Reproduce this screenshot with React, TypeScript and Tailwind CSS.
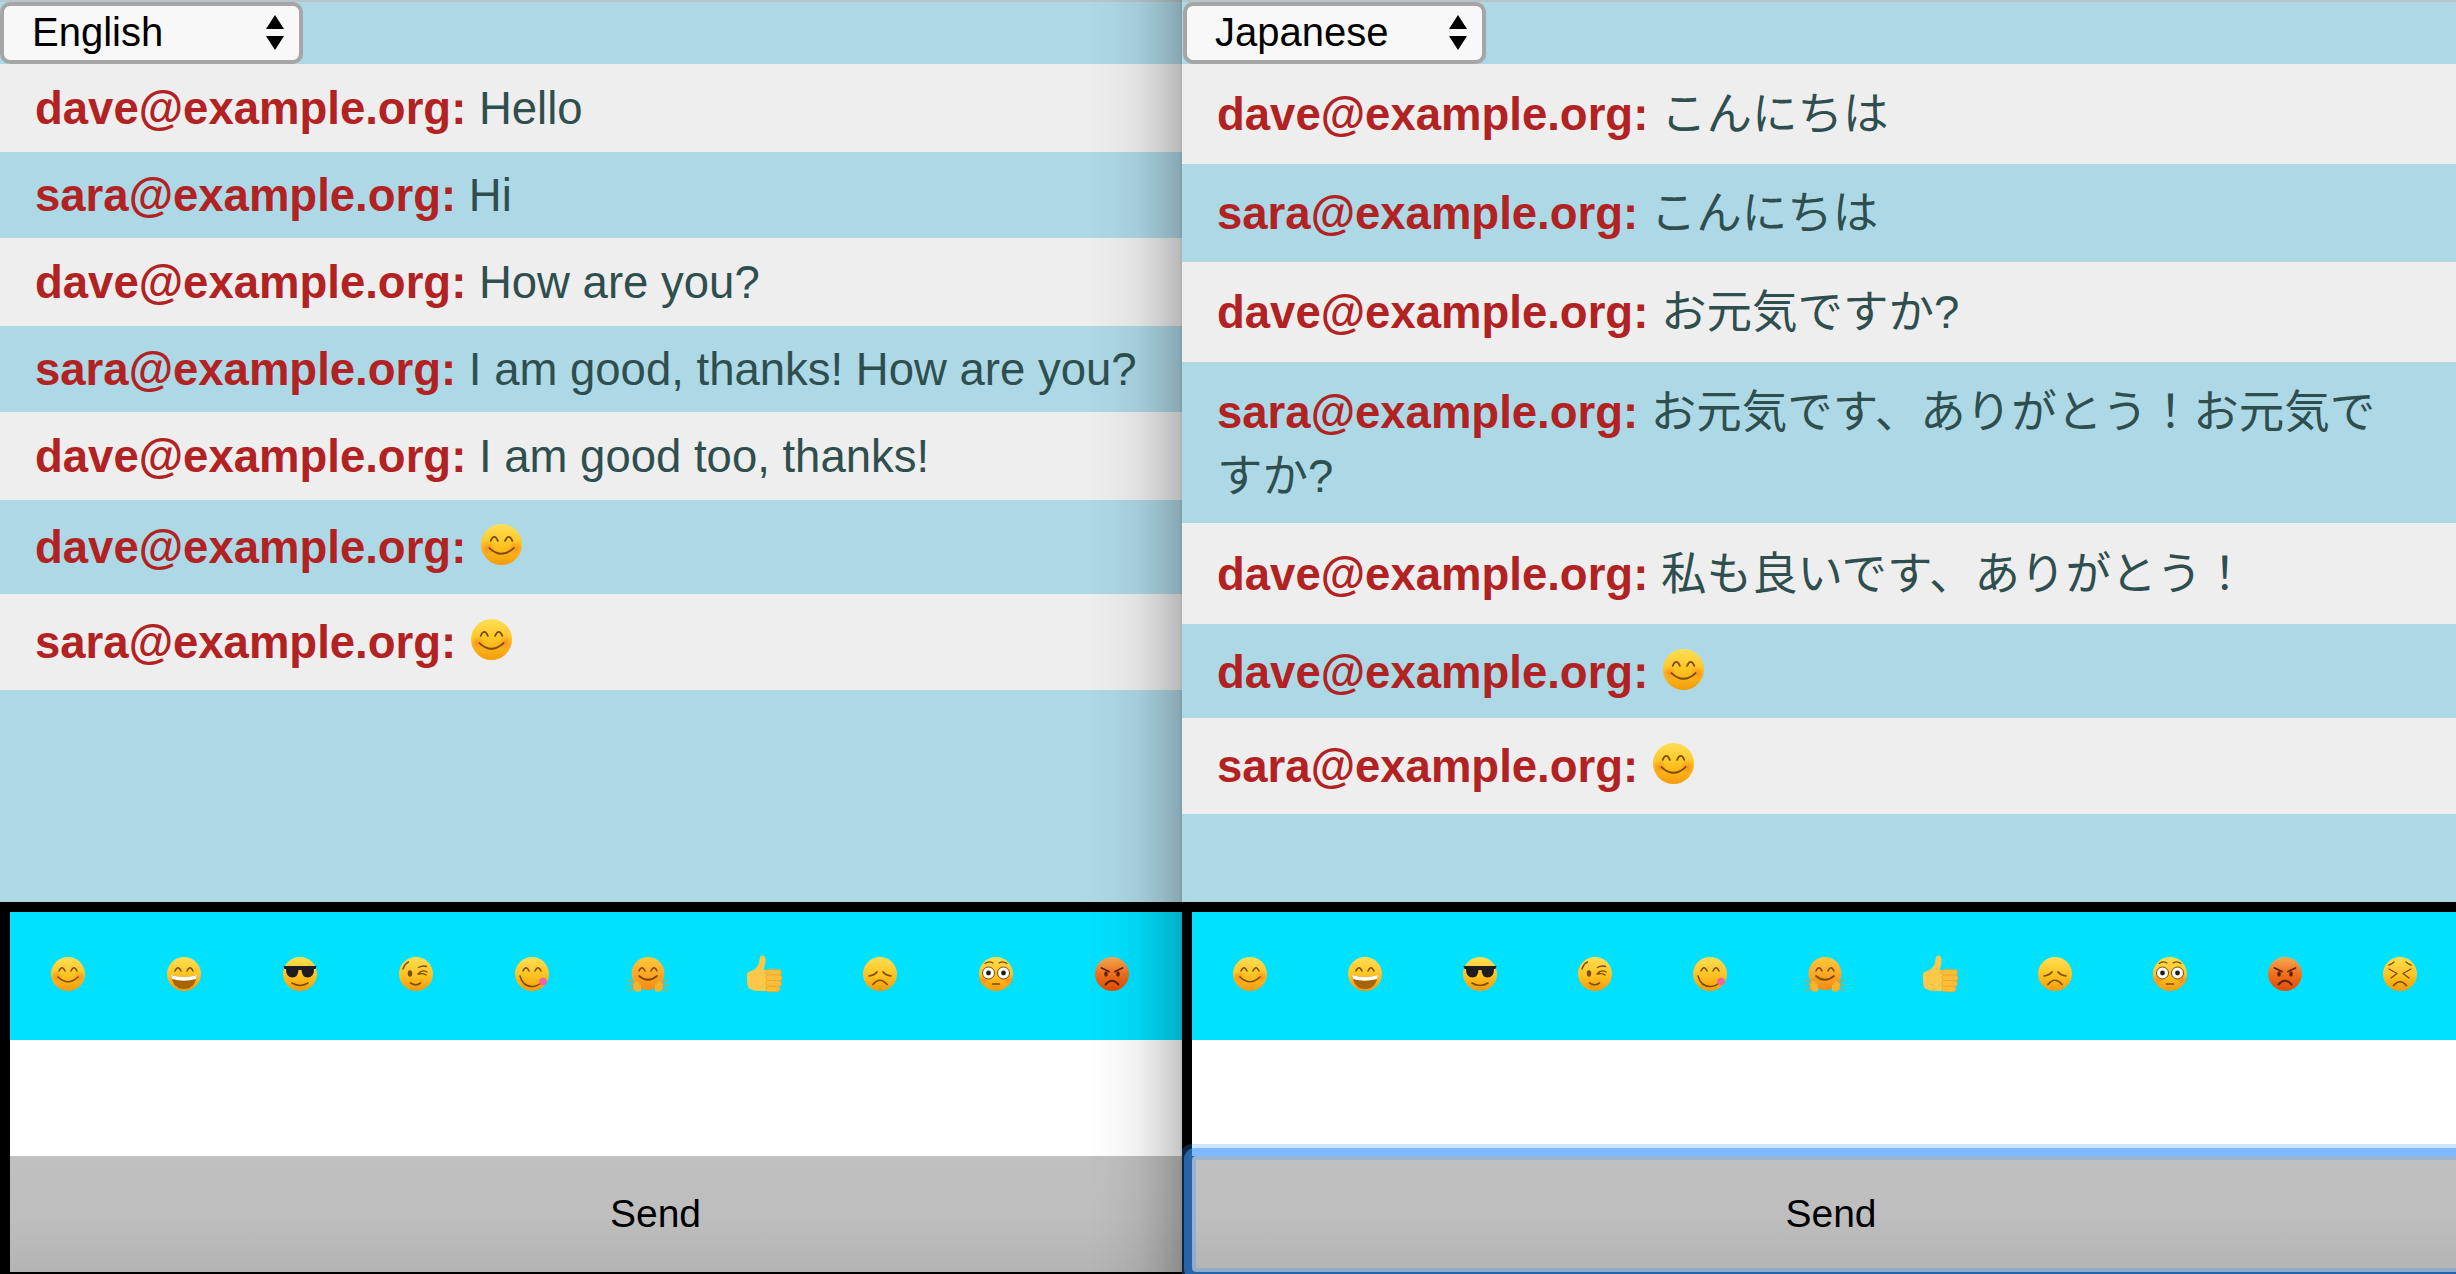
import React from "react";

const INK = "#7d4a00";

function Eyes() {
  return (
    <g fill="none" stroke={INK} strokeWidth="1.5" strokeLinecap="round">
      <path d="M9 15 q3 -6.5 6 0" />
      <path d="M21 15 q3 -6.5 6 0" />
    </g>
  );
}

const faces: Record<string, React.ReactNode> = {
  smile: (
    <>
      <circle cx="18" cy="18" r="17" fill="url(#faceGrad)" />
      <circle cx="6.5" cy="21" r="6" fill="url(#blush)" />
      <circle cx="29.5" cy="21" r="6" fill="url(#blush)" />
      <Eyes />
      <path d="M8 21 q10 9.5 20 0" fill="none" stroke={INK} strokeWidth="1.6" strokeLinecap="round" />
    </>
  ),
  grin: (
    <>
      <circle cx="18" cy="18" r="17" fill="url(#faceGrad)" />
      <Eyes />
      <path d="M5 19 Q18 23 31 19 Q29 33 18 33 Q7 33 5 19Z" fill="#a66500" />
      <path d="M5 19 Q18 23 31 19 L30 23 Q18 26.5 6 23Z" fill="#ffffff" />
    </>
  ),
  cool: (
    <>
      <circle cx="18" cy="18" r="17" fill="url(#faceGrad)" />
      <path d="M1.5 10 H34.5 L33.5 13 H32 Q32 21.5 25.5 21.5 Q20 21.5 19.5 14 H16.5 Q16 21.5 10.5 21.5 Q4 21.5 4 13 H2.5Z" fill="#1d1d22" />
      <path d="M10 27 q8 5 16 0" fill="none" stroke={INK} strokeWidth="1.6" strokeLinecap="round" />
    </>
  ),
  wink: (
    <>
      <circle cx="18" cy="18" r="17" fill="url(#faceGrad)" />
      <path d="M5 13 q1.5 -5 5.5 -7" fill="none" stroke={INK} strokeWidth="1.4" strokeLinecap="round" />
      <ellipse cx="12" cy="17.5" rx="2.2" ry="3.2" fill={INK} />
      <path d="M20 18 q4 -5 9 -2 M20.5 11.5 q4 -2.5 8 -1 M21 18 q4 -1 7 1" fill="none" stroke={INK} strokeWidth="1.4" strokeLinecap="round" />
      <path d="M12.5 27 q5.5 3.5 10 0" fill="none" stroke={INK} strokeWidth="1.6" strokeLinecap="round" />
    </>
  ),
  yum: (
    <>
      <circle cx="18" cy="18" r="17" fill="url(#faceGrad)" />
      <Eyes />
      <path d="M6 20 Q9 31 19 30.5 Q26 30 29 24" fill="none" stroke={INK} strokeWidth="1.5" strokeLinecap="round" />
      <circle cx="29" cy="25.5" r="3.8" fill="#f2629c" />
    </>
  ),
  hug: (
    <>
      <circle cx="18" cy="17.5" r="16.5" fill="url(#hugGrad)" />
      <Eyes />
      <path d="M9 20 q9 7.5 18 0" fill="none" stroke={INK} strokeWidth="1.7" strokeLinecap="round" />
      <path d="M3 26 Q9 24 11 30 L11 35 Q6 37 3 33Z" fill="#f9b42c" />
      <path d="M33 26 Q27 24 25 30 L25 35 Q30 37 33 33Z" fill="#f9b42c" />
      <path d="M4 27 L-1 24.5 M3.5 30 L-2 29.5 M4 33 L-1 34.5 M32 27 L37 24.5 M32.5 30 L38 29.5 M32 33 L37 34.5" stroke="#e0952a" strokeWidth="1.2" strokeLinecap="round" />
    </>
  ),
  thumb: (
    <>
      <path d="M1 18 Q1 16 4 15.5 Q8 14.5 11 11 Q13.5 8 13.5 3 Q14 -1 17 -0.5 Q20 0.5 19.5 6 Q19 10 17.5 14 H24 V35 H12 Q8 35 6 33.5 Q3 33 2 31 Q1 28 1 24Z" fill="#fcc84a" />
      <rect x="20" y="13.5" width="15.5" height="5.8" rx="2.9" fill="#fbbd3a" stroke="#eb9f20" strokeWidth=".6" />
      <rect x="20" y="19" width="16" height="5.8" rx="2.9" fill="#fbbd3a" stroke="#eb9f20" strokeWidth=".6" />
      <rect x="20" y="24.6" width="15.5" height="5.8" rx="2.9" fill="#fbbd3a" stroke="#eb9f20" strokeWidth=".6" />
      <rect x="20" y="30.2" width="14" height="5.6" rx="2.8" fill="#fbbd3a" stroke="#eb9f20" strokeWidth=".6" />
    </>
  ),
  sad: (
    <>
      <circle cx="18" cy="18" r="17" fill="url(#faceGrad)" />
      <path d="M7 20 Q12 19.5 15 16 M29 20 Q24 19.5 21 16" fill="none" stroke={INK} strokeWidth="1.7" strokeLinecap="round" />
      <path d="M11 28.5 Q18 20 25 28.5" fill="none" stroke={INK} strokeWidth="1.7" strokeLinecap="round" />
    </>
  ),
  flushed: (
    <>
      <circle cx="18" cy="18" r="17" fill="url(#faceGrad)" />
      <circle cx="5.5" cy="24" r="6" fill="url(#blush)" />
      <circle cx="30.5" cy="24" r="6" fill="url(#blush)" />
      <path d="M7 7.5 q4 -3 8 -0.5 M21 7 q4 -2.5 8 0.5" fill="none" stroke={INK} strokeWidth="1.2" strokeLinecap="round" />
      <circle cx="10.5" cy="17" r="6" fill="#ffffff" stroke={INK} strokeWidth="1" />
      <circle cx="25.5" cy="17" r="6" fill="#ffffff" stroke={INK} strokeWidth="1" />
      <circle cx="10.5" cy="17" r="2.4" fill="#1c1c1c" />
      <circle cx="25.5" cy="17" r="2.4" fill="#1c1c1c" />
      <path d="M14.5 28 h7" stroke={INK} strokeWidth="1.6" strokeLinecap="round" />
    </>
  ),
  angry: (
    <>
      <circle cx="18" cy="18" r="17" fill="url(#angryGrad)" />
      <path d="M7.5 12 L15 15.5 M28.5 12 L21 15.5" stroke="#5a2300" strokeWidth="1.8" strokeLinecap="round" />
      <ellipse cx="12" cy="18" rx="1.8" ry="2.8" fill="#5a2300" />
      <ellipse cx="24" cy="18" rx="1.8" ry="2.8" fill="#5a2300" />
      <path d="M11.5 28.5 Q18 21 24.5 28.5" fill="none" stroke="#5a2300" strokeWidth="2" strokeLinecap="round" />
    </>
  ),
  persevere: (
    <>
      <circle cx="18" cy="18" r="17" fill="url(#faceGrad)" />
      <path d="M7 13 L15 17.5 L9 22 M29 13 L21 17.5 L27 22 M7 9 Q10 8 12 6 M29 9 Q26 8 24 6" fill="none" stroke={INK} strokeWidth="1.4" strokeLinecap="round" strokeLinejoin="round" />
      <path d="M11.5 29.5 Q18 22 24.5 29.5" fill="none" stroke={INK} strokeWidth="1.7" strokeLinecap="round" />
    </>
  ),
};

function Face({ name, className }: { name: string; className: string }) {
  return (
    <svg viewBox="1 1 34 34" className={className} overflow="visible" aria-label={name}>
      {faces[name]}
    </svg>
  );
}

function SharedDefs() {
  return (
    <svg className="absolute h-0 w-0">
      <defs>
        <linearGradient id="faceGrad" x1="0" y1="0" x2="0" y2="1">
          <stop offset="0" stopColor="#ffdf55" />
          <stop offset="0.55" stopColor="#fdc21f" />
          <stop offset="1" stopColor="#f59a0c" />
        </linearGradient>
        <linearGradient id="hugGrad" x1="0" y1="0" x2="0" y2="1">
          <stop offset="0" stopColor="#ffc93c" />
          <stop offset="1" stopColor="#f98a12" />
        </linearGradient>
        <linearGradient id="angryGrad" x1="0" y1="0" x2="0" y2="1">
          <stop offset="0" stopColor="#f7a957" />
          <stop offset="0.5" stopColor="#f0701c" />
          <stop offset="1" stopColor="#e04c06" />
        </linearGradient>
        <radialGradient id="blush">
          <stop offset="0" stopColor="#ff7a1a" stopOpacity="0.65" />
          <stop offset="1" stopColor="#ff7a1a" stopOpacity="0" />
        </radialGradient>
      </defs>
    </svg>
  );
}

type Msg = { who: string; text?: string; emoji?: boolean; row: string };

const enMsgs: Msg[] = [
  { who: "dave", text: "Hello", row: "h-[88px] leading-[90px] pr-[35px] bg-[#eeeeee]" },
  { who: "sara", text: "Hi", row: "h-[86px] leading-[88px] pr-[35px] bg-[#add8e6]" },
  { who: "dave", text: "How are you?", row: "h-[88px] leading-[90px] pr-[35px] bg-[#eeeeee]" },
  { who: "sara", text: "I am good, thanks! How are you?", row: "h-[86px] leading-[88px] pr-[35px] bg-[#add8e6]" },
  { who: "dave", text: "I am good too, thanks!", row: "h-[88px] leading-[90px] pr-[35px] bg-[#eeeeee]" },
  { who: "dave", emoji: true, row: "h-[94px] leading-[96px] pr-[35px] bg-[#add8e6]" },
  { who: "sara", emoji: true, row: "h-[96px] leading-[98px] pr-[35px] bg-[#eeeeee]" },
];

const jaMsgs: Msg[] = [
  { who: "dave", text: "こんにちは", row: "h-[100px] leading-[102px] pr-[35px] bg-[#eeeeee]" },
  { who: "sara", text: "こんにちは", row: "h-[98px] leading-[100px] pr-[35px] bg-[#add8e6]" },
  { who: "dave", text: "お元気ですか?", row: "h-[100px] leading-[102px] pr-[35px] bg-[#eeeeee]" },
  { who: "sara", text: "お元気です、ありがとう！お元気ですか?", row: "h-[161px] pt-[19px] leading-[64px] pr-[60px] bg-[#add8e6]" },
  { who: "dave", text: "私も良いです、ありがとう！", row: "h-[101px] leading-[104px] pr-[35px] bg-[#eeeeee]" },
  { who: "dave", emoji: true, row: "h-[94px] leading-[97px] pr-[35px] bg-[#add8e6]" },
  { who: "sara", emoji: true, row: "h-[96px] leading-[98px] pr-[35px] bg-[#eeeeee]" },
];

function Row({ m }: { m: Msg }) {
  return (
    <div className={`pl-[35px] text-[45.5px] text-[#2f4f4f] ${m.row}`}>
      <b className="font-bold text-[#b22222]">{m.who}@example.org:</b>{" "}
      {m.emoji ? <Face name="smile" className="ml-[2px] inline-block h-[41px] w-[41px] align-[-2px]" /> : m.text}
    </div>
  );
}

function LangSelect({ value, margin }: { value: string; margin: string }) {
  return (
    <div
      role="combobox"
      aria-expanded="false"
      className={`flex h-[62px] w-[303px] items-center justify-between rounded-[10px] border-[4px] border-[#a6a6a6] bg-[#f8f8f8] pr-[15px] pb-[2px] pl-[28px] text-[40px] text-black ${margin}`}
    >
      <span>{value}</span>
      <svg viewBox="0 0 18 35" className="h-[35px] w-[18px]">
        <path d="M9 0 L18 14 H0Z M0 21 H18 L9 35Z" fill="#000000" />
      </svg>
    </div>
  );
}

const leftEmoji = ["smile", "grin", "cool", "wink", "yum", "hug", "thumb", "sad", "flushed", "angry"];
const rightEmoji = [...leftEmoji, "persevere"];

function Composer({ names, cell, button }: { names: string[]; cell: string; button: string }) {
  return (
    <div className="flex shrink-0 flex-col bg-black pt-[10px] pb-[2px] pl-[10px]">
      <div className="flex h-[128px] items-center bg-[#00e1ff]">
        {names.map((n) => (
          <button key={n} className={`flex h-full shrink-0 items-center justify-center pb-[4px] ${cell}`}>
            <Face name={n} className="h-[34px] w-[34px]" />
          </button>
        ))}
      </div>
      <input className="h-[116px] w-full bg-white outline-none" aria-label="message" />
      <button className={`relative z-10 h-[116px] shrink-0 bg-gradient-to-b from-[#c0c0c0] via-[#bebebe] to-[#b4b4b4] text-[39px] text-black ${button}`}>
        Send
      </button>
    </div>
  );
}

export default function App() {
  return (
    <div className="flex h-[1274px] w-[2456px] overflow-hidden bg-black font-['Liberation_Sans','Noto_Sans_CJK_JP',sans-serif]">
      <SharedDefs />
      <section className="relative flex w-[1182px] shrink-0 flex-col overflow-hidden">
        <div className="flex-1 border-t-2 border-[#b9c3c8] bg-[#add8e6]">
          <LangSelect value="English" margin="" />
          {enMsgs.map((m, i) => (
            <Row key={i} m={m} />
          ))}
        </div>
        <Composer names={leftEmoji} cell="w-[116px]" button="w-[calc(100%+119px)]" />
        <div className="pointer-events-none absolute inset-y-0 right-0 z-20 w-[94px] border-r-2 border-black/25 bg-[linear-gradient(to_left,rgba(0,0,0,.22),rgba(0,0,0,.13)_22%,rgba(0,0,0,.06)_45%,rgba(0,0,0,.02)_72%,transparent)]" />
      </section>
      <section className="flex min-w-0 flex-1 flex-col overflow-hidden">
        <div className="flex-1 border-t-2 border-[#b9c3c8] bg-[#add8e6]">
          <LangSelect value="Japanese" margin="ml-px" />
          {jaMsgs.map((m, i) => (
            <Row key={i} m={m} />
          ))}
        </div>
        <Composer
          names={rightEmoji}
          cell="w-[115px]"
          button="w-[calc(100%+14px)] rounded-[4px] shadow-[inset_0_0_0_4px_rgba(60,150,255,.3),0_0_0_8px_rgba(60,150,255,.55),0_0_0_12px_rgba(60,150,255,.25)]"
        />
      </section>
    </div>
  );
}
